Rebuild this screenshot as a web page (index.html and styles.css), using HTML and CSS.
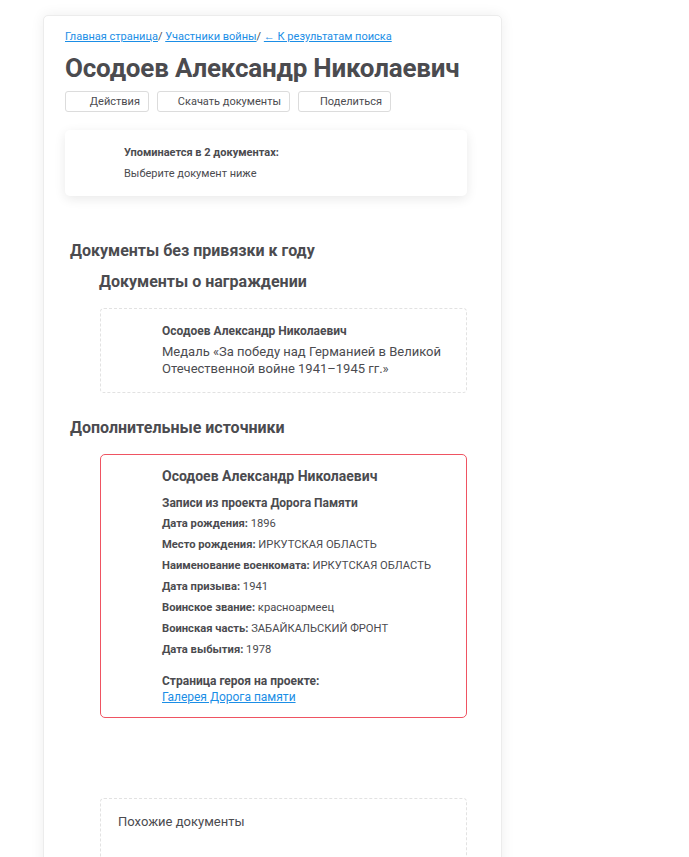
FILE: index.html
```html
<!DOCTYPE html>
<html lang="ru">
<head>
<meta charset="utf-8">
<title>Осодоев Александр Николаевич</title>
<link rel="stylesheet" href="styles.css">
</head>
<body>
<div class="page">
  <div class="card">
    <nav class="crumbs"><a href="#">Главная страница</a>/ <a href="#">Участники войны</a>/ <a href="#">← К результатам поиска</a></nav>
    <h1 class="title">Осодоев Александр Николаевич</h1>
    <div class="actions">
      <button class="btn btn-actions">Действия</button>
      <button class="btn btn-download">Скачать документы</button>
      <button class="btn btn-share">Поделиться</button>
    </div>
    <div class="mention">
      <div class="mention-title">Упоминается в 2 документах:</div>
      <div class="mention-sub">Выберите документ ниже</div>
    </div>

    <h2 class="sec">Документы без привязки к году</h2>
    <h3 class="subsec">Документы о награждении</h3>
    <div class="doc dashed">
      <div class="doc-name">Осодоев Александр Николаевич</div>
      <div class="doc-desc">Медаль «За победу над Германией в Великой Отечественной войне 1941–1945 гг.»</div>
    </div>

    <h2 class="sec sec-extra">Дополнительные источники</h2>
    <div class="doc red">
      <div class="red-name">Осодоев Александр Николаевич</div>
      <div class="red-src">Записи из проекта Дорога Памяти</div>
      <div class="rows">
        <div class="row"><b>Дата рождения:</b> 1896</div>
        <div class="row"><b>Место рождения:</b> ИРКУТСКАЯ ОБЛАСТЬ</div>
        <div class="row"><b>Наименование военкомата:</b> ИРКУТСКАЯ ОБЛАСТЬ</div>
        <div class="row"><b>Дата призыва:</b> 1941</div>
        <div class="row"><b>Воинское звание:</b> красноармеец</div>
        <div class="row"><b>Воинская часть:</b> ЗАБАЙКАЛЬСКИЙ ФРОНТ</div>
        <div class="row"><b>Дата выбытия:</b> 1978</div>
      </div>
      <div class="hero">Страница героя на проекте:</div>
      <a class="hero-link" href="#">Галерея Дорога памяти</a>
    </div>

    <div class="similar dashed">
      <div class="similar-title">Похожие документы</div>
    </div>
  </div>
</div>
</body>
</html>
```

FILE: styles.css
```css
html, body {
  margin: 0;
  padding: 0;
  background: #ffffff;
}
body {
  font-family: "Roboto", "Liberation Sans", sans-serif;
  color: #4b4b4f;
  height: 857px;
  overflow: hidden;
}
.page {
  padding: 15px 0 0 43px;
}
.card {
  width: 415px;
  min-height: 900px;
  padding: 14px 21px 0 21px;
  background: #fff;
  border: 1px solid #ececec;
  border-radius: 5px;
  box-shadow: 0 0 14px rgba(0, 0, 0, 0.07);
}
.crumbs {
  font-size: 11px;
  line-height: 14px;
  color: #4b4b4f;
}
.crumbs a {
  color: #1b8ee6;
  text-decoration: underline;
}
.title {
  margin: 6px 0 0 0;
  font-size: 26px;
  line-height: 36px;
  font-weight: 700;
  color: #4b4b4f;
  letter-spacing: -0.2px;
}
.actions {
  display: flex;
  gap: 8px;
  margin-top: 5px;
}
.btn {
  box-sizing: border-box;
  height: 21px;
  padding: 0 8px 0 0;
  font-family: inherit;
  font-size: 11px;
  color: #4b4b4f;
  background: #fff;
  border: 1px solid #dcdcdc;
  border-radius: 3px;
  white-space: nowrap;
  text-align: right;
}
.btn-actions { width: 84px; }
.btn-download { width: 133px; }
.btn-share { width: 93px; }
.mention {
  margin-top: 18px;
  width: 343px;
  height: 50px;
  padding: 16px 0 0 59px;
  border-radius: 5px;
  box-shadow: 0 3px 12px rgba(0, 0, 0, 0.09);
}
.mention-title {
  font-size: 11px;
  font-weight: 700;
  line-height: 14px;
}
.mention-sub {
  margin-top: 7px;
  font-size: 11px;
  line-height: 14px;
}
.sec {
  margin: 45px 0 0 5px;
  font-size: 16px;
  line-height: 20px;
  font-weight: 700;
}
.subsec {
  margin: 11px 0 0 34px;
  font-size: 16px;
  line-height: 20px;
  font-weight: 700;
}
.doc {
  margin-left: 35px;
  width: 367px;
  box-sizing: border-box;
  padding-left: 61px;
}
.dashed {
  border: 1px dashed #e2e2e2;
  border-radius: 4px;
}
.doc.dashed {
  margin-top: 16px;
  height: 85px;
  padding-top: 14px;
}
.doc-name {
  font-size: 12px;
  font-weight: 700;
  line-height: 16px;
}
.doc-desc {
  margin-top: 4px;
  font-size: 13px;
  line-height: 17px;
  padding-right: 16px;
}
.sec-extra {
  margin-top: 25px;
}
.doc.red {
  margin-top: 16px;
  height: 264px;
  padding-top: 12px;
  border: 1px solid #ef5462;
  border-radius: 5px;
}
.red-name {
  font-size: 14px;
  font-weight: 700;
  line-height: 18px;
}
.red-src {
  margin-top: 10px;
  font-size: 12px;
  font-weight: 700;
  line-height: 16px;
}
.rows {
  margin-top: 2px;
}
.row {
  font-size: 11.2px;
  line-height: 21px;
}
.row b {
  font-weight: 700;
}
.hero {
  margin-top: 13px;
  font-size: 12px;
  font-weight: 700;
  line-height: 16px;
}
.hero-link {
  display: block;
  width: max-content;
  margin-top: 0;
  font-size: 12px;
  line-height: 16px;
  color: #1b8ee6;
}
.similar {
  margin: 80px 0 0 35px;
  width: 367px;
  height: 80px;
  box-sizing: border-box;
  padding: 14px 0 0 17px;
}
.similar-title {
  font-size: 13px;
  line-height: 17px;
}
```
